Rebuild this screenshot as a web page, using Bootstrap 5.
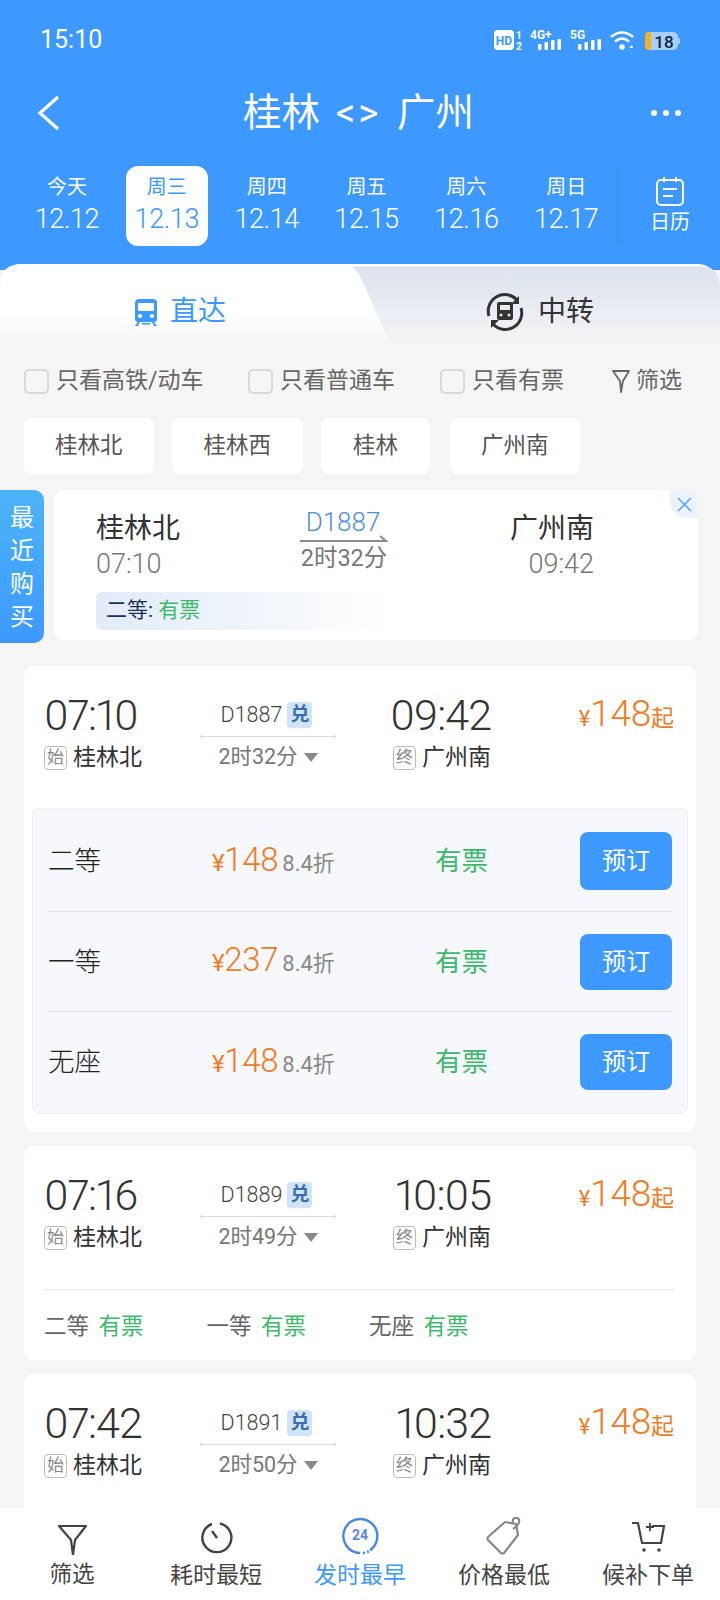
<!doctype html>
<html lang="zh-CN">
<head>
<meta charset="utf-8">
<title>桂林 广州</title>
<link href="https://cdn.jsdelivr.net/npm/bootstrap@5.3.0/dist/css/bootstrap.min.css" rel="stylesheet">
<style>
html,body{margin:0;background:#f5f5f5}
body{font-family:Roboto,"Noto Sans CJK SC",sans-serif;font-weight:400;color:#333}
.screen{width:720px;height:1600px;overflow:hidden}
.hdr{background:#3d98ff;height:270px;color:#fff;flex:none}
.stat{height:80px;padding:0 40px;font-size:25px;line-height:80px}
.titlebar{height:66px;padding:0 38px 0 37px;position:relative}
.titletext{font-size:38.500px;line-height:72px;flex:1;text-align:center;padding-left:6px;word-spacing:6px}
.titletext i{font-style:normal;letter-spacing:3px}
.daterow{margin-top:20px;padding-left:17px;height:80px}
.dayitem{width:100px;display:flex;flex-direction:column;align-items:center;position:relative}
.daypill{width:82px;height:80px;display:flex;flex-direction:column;align-items:center;border-radius:12px}
.daypill.cur{background:#fff;color:#3d98ff}
.wk{font-size:20px;line-height:24px;margin-top:9px}
.dt{font-size:27px;font-weight:300;line-height:36px;margin-top:2px;letter-spacing:-.4px}
.calbox{width:104px;padding-left:4px;display:flex;flex-direction:column;align-items:center;background:linear-gradient(90deg,#3b93f8 0,#3d98ff 12px)}
.callabel{font-size:20px;line-height:26px;margin-top:3px}
.tabs{position:relative;height:84px;margin-top:-6px;flex:none;background:linear-gradient(180deg,#fff 0,#fff 2px,#dde3ed 3px,#e7ebf2 40px,#f5f5f5 84px);border-radius:22px 22px 0 0}
.tabshape{position:absolute;left:0;top:0}
.tabrow{position:relative;height:84px}
.tab1{width:398px;font-size:28px;color:#3d98ff;padding-left:134px;gap:12px;padding-top:12px}
.tab2{padding-left:88px;font-size:28px;color:#333;gap:14px;padding-top:12px}
.filters{margin-top:20px;padding-left:24px;height:26px;font-size:23px;color:#666;flex:none}
.ft{display:flex;align-items:center;gap:7px;white-space:nowrap}
.form-check-input.box{width:25px;height:25px;margin:0;border:2px solid #d9d9d9;border-radius:5px;background-color:#f5f5f5;flex:none}
.w1{width:224px}.w2{width:192px}.w3{width:172px}
.chips{margin-top:24px;padding-left:24px;gap:18px;flex:none}
.chip{height:56px;line-height:54px;padding:0 31px;background:#fff;border-radius:8px;font-size:22.500px;color:#555}
.chip.mid{padding:0 32px}
.chip.last{margin-left:2px}
.recent{margin-top:16px;height:153px;flex:none}
.sidetab{width:44px;height:153px;background:linear-gradient(180deg,#4bb4f6 0,#3d98ff 100%);border-radius:0 10px 10px 0;color:#fff;font-size:24px;line-height:33px;text-align:center;padding-top:12px;flex:none}
.reccard{width:644px;height:150px;margin-left:10px;background:#fff;border-radius:10px;position:relative;padding:19px 42px 0;overflow:hidden}
.closec{position:absolute;right:0;top:0;width:28px;height:28px;background:#e9f2fd;border-radius:0 0 0 16px;display:flex;align-items:center;justify-content:center}
.recst{font-size:28px;line-height:40px;color:#333}
.rectime{font-size:27px;font-weight:300;line-height:36px;color:#777;margin-top:-3px}
.recno{font-size:26px;line-height:32px;color:#4a90e2;font-weight:300;text-align:center;margin-top:-3px;margin-left:-2px}
.recdur{font-size:23.500px;line-height:30px;color:#777;margin-top:0;text-align:center;white-space:nowrap}
.recmid{width:88px;margin-left:118px}
.recend{margin-left:118px;width:88px;text-align:right}
.recbadge{width:290px;height:38px;line-height:37px;margin-top:10px;border-radius:6px;background:linear-gradient(90deg,#e2ebf8 0,#f0f5fb 55%,#fff 100%);padding-left:10px;font-size:21px;color:#1d2f5f}
.grn{color:#3cb96b}
.trip{margin:0 24px;border:0;border-radius:10px;flex:none;background:#fff}
.first{margin-top:23px;padding-bottom:18px}
.next{margin-top:14px}
.lastc{padding-bottom:100px}
.trhead{padding-top:27px;height:102px}
.tdep{width:170px;padding-left:20px}
.tmid{width:148px;margin-top:-2px}
.tarr{width:149px;text-align:right}
.tpri{width:183px;padding-right:0;margin-top:-1px;justify-content:flex-end;display:flex;align-items:baseline;color:#f17a26;height:44px}
.clock{font-size:43px;line-height:44px;font-weight:300;color:#333;letter-spacing:-1px;font-variant-numeric:proportional-nums;font-feature-settings:"pnum" 1}
.stn{margin-top:9px;font-size:23px;line-height:24px;color:#333;gap:6px;height:24px}
.tarr .stn{justify-content:flex-end}
.mk{width:23px;height:24px;border:1px solid #bbb;border-radius:4px;font-size:17px;line-height:21px;color:#888;text-align:center;flex:none}
.noline{height:26px;margin-top:11px;gap:5px;font-size:21.500px;line-height:26px;color:#444;font-weight:300;padding-right:3px}
.dui{width:25px;height:26px;background:#cfe3fb;color:#3a6ea8;border-radius:4px;font-size:19px;line-height:25px;font-weight:700;text-align:center}
.rule{height:1px;background:#ddd;margin:8px 6px 0;position:relative}
.rule::before,.rule::after{content:"";position:absolute;top:-1px;width:3px;height:3px;border-radius:50%;background:#ddd}
.rule::before{left:0}.rule::after{right:0}
.durline{gap:6px;margin-top:8px;font-size:21.500px;line-height:24px;color:#777}
.tri{width:0;height:0;border-left:7px solid transparent;border-right:7px solid transparent;border-top:9px solid #888}
.yen{font-size:22px}
.num{font-size:37px;font-weight:300;letter-spacing:-.3px;line-height:44px}
.qi{font-size:23px}
.panel{margin:40px 8px 0;border:1px solid #eef0f4;border-radius:8px;background:#f6f8fb;padding:2px 15px 1px}
.prow{height:100px}
.prow.top{height:101px}
.prow.dv{border-bottom:1px solid #e4e6ea}
.pl{width:164px;font-size:26.500px;color:#222;font-weight:300}
.pp{width:223px;color:#f17a26;display:flex;align-items:baseline;gap:4px}
.pn{font-size:33px;font-weight:300;letter-spacing:-.3px;line-height:40px}
.pn small{font-size:24px;font-weight:400}
.pd{font-size:22px;color:#888}
.ps{flex:1;font-size:26.500px;color:#3cb96b}
.btn.bk{width:92px;height:56px;background:#3d98ff;border:0;border-radius:8px;color:#fff;font-size:24px;padding:0}
.top .btn.bk{height:58px}
.classes{margin:41px 22px 0 20px;border-top:1px solid #e6e6e6;height:71px;font-size:22.500px;color:#666;padding-top:4px}
.cl{width:162.500px}
.cl b{font-weight:400;color:#3cb96b;margin-left:4px}
.btm{height:92px;background:#fff;flex:none;position:relative}
.btmi{width:144px;display:flex;flex-direction:column;align-items:center;font-size:23px;color:#444}
.btmi svg{height:38px;margin-top:9px;width:40px}
.btmi span{line-height:30px;margin-top:6px}
.btmi.on{color:#3d98ff}
.flow{flex:1;min-height:0;overflow:hidden}
</style>
</head>
<body>
<div class="screen d-flex flex-column">
  <header class="hdr">
    <div class="stat d-flex justify-content-between">
      <span>15:10</span>
      <svg width="186" height="24" viewBox="0 0 186 24" style="margin-top:29px" fill="#fff" font-family="Roboto,sans-serif" font-weight="700">
        <rect x="0" y="1" width="20" height="20" rx="4"/>
        <text x="10" y="16" font-size="12" fill="#3d98ff" text-anchor="middle">HD</text>
        <text x="22" y="10" font-size="10">1</text><text x="22" y="21" font-size="10">2</text>
        <text x="36" y="10" font-size="12">4G+</text>
        <rect x="44" y="15" width="3.500" height="6" rx="1"/><rect x="50.500" y="13" width="3.500" height="8" rx="1"/><rect x="57" y="11" width="3.500" height="10" rx="1"/><rect x="63.500" y="10" width="3.500" height="11" rx="1"/>
        <text x="76" y="10" font-size="12">5G</text>
        <rect x="84" y="15" width="3.500" height="6" rx="1"/><rect x="90.500" y="13" width="3.500" height="8" rx="1"/><rect x="97" y="11" width="3.500" height="10" rx="1"/><rect x="103.500" y="10" width="3.500" height="11" rx="1"/>
        <g fill="none" stroke="#fff" stroke-width="2.600"><path d="M117 8q11-9 22 0"/><path d="M121 12.500q7-6 14 0"/></g><circle cx="128" cy="18" r="2.800"/><path d="M135 19l3-3 1 3z"/>
        <rect x="151" y="3" width="33" height="18" rx="5" fill="#a9cffb"/><rect x="184" y="9" width="2" height="6" rx="1" fill="#a9cffb"/>
        <path d="M157 3h-2a4 4 0 0 0-4 4v10a4 4 0 0 0 4 4h2z" fill="#f7b21b"/>
        <text x="170" y="18.500" font-size="17" font-weight="500" fill="#10233f" text-anchor="middle">18</text>
      </svg>
    </div>
    <div class="titlebar d-flex align-items-center">
      <svg width="24" height="36" viewBox="0 0 24 36" fill="none" stroke="#fff" stroke-width="3.200"><path d="M21 2 3 18l18 16"/></svg>
      <div class="titletext">桂林 <i>&lt;&gt;</i> 广州</div>
      <svg width="32" height="8" viewBox="0 0 32 8" fill="#fff"><circle cx="4" cy="4" r="3"/><circle cx="16" cy="4" r="3"/><circle cx="28" cy="4" r="3"/></svg>
    </div>
    <div class="daterow d-flex">
      <div class="dayitem"><div class="daypill"><div class="wk">今天</div><div class="dt">12.12</div></div></div>
      <div class="dayitem"><div class="daypill cur"><div class="wk">周三</div><div class="dt">12.13</div></div></div>
      <div class="dayitem"><div class="daypill"><div class="wk">周四</div><div class="dt">12.14</div></div></div>
      <div class="dayitem"><div class="daypill"><div class="wk">周五</div><div class="dt">12.15</div></div></div>
      <div class="dayitem"><div class="daypill"><div class="wk">周六</div><div class="dt">12.16</div></div></div>
      <div class="dayitem"><div class="daypill"><div class="wk">周日</div><div class="dt">12.17</div></div></div>
      <div class="calbox">
        <svg width="30" height="30" viewBox="0 0 30 30" fill="none" stroke="#fff" stroke-width="2" style="margin-top:10px"><rect x="2" y="4" width="26" height="25" rx="4"/><path d="M9 1v5M21 1v5M8 13h14M8 20h10"/></svg>
        <div class="callabel">日历</div>
      </div>
    </div>
  </header>

  <div class="tabs">
    <svg class="tabshape" width="400" height="84" viewBox="0 0 400 84"><defs><linearGradient id="tg" x1="0" y1="0" x2="0" y2="1"><stop offset="0" stop-color="#fff"/><stop offset=".6" stop-color="#fff"/><stop offset="1" stop-color="#f5f5f5"/></linearGradient></defs><path d="M0 84V22Q0 0 22 0H340Q354 0 360 12L392 84Z" fill="url(#tg)"/></svg>
    <div class="tabrow d-flex">
      <div class="tab1 d-flex align-items-center">
        <svg width="24" height="27" viewBox="0 0 24 27" fill="#3d98ff"><path d="M5 0h14a4 4 0 0 1 4 4v16a3 3 0 0 1-3 3H4a3 3 0 0 1-3-3V4a4 4 0 0 1 4-4z"/><rect x="4" y="4" width="16" height="8" rx="1" fill="#fff"/><circle cx="6" cy="17" r="2" fill="#fff"/><circle cx="18" cy="17" r="2" fill="#fff"/><path d="M4 23 1 27h3l2-4zM20 23l3 4h-3l-2-4zM8 24h8v1.500H8z"/></svg>
        <span>直达</span>
      </div>
      <div class="tab2 d-flex align-items-center">
        <svg width="38" height="38" viewBox="0 0 38 38"><g fill="none" stroke="#333" stroke-width="3"><path d="M3 23A16.500 16.500 0 0 1 31 7"/><path d="M35 15A16.500 16.500 0 0 1 7 31"/></g><path d="M33 3v8h-8zM5 35v-8h8z" fill="#333"/><path d="M13 9h12a2 2 0 0 1 2 2v14a2 2 0 0 1-2 2H13a2 2 0 0 1-2-2V11a2 2 0 0 1 2-2z" fill="#333"/><rect x="14" y="12" width="10" height="5" fill="#e7ebf2"/><circle cx="15" cy="22" r="1.500" fill="#e7ebf2"/><circle cx="23" cy="22" r="1.500" fill="#e7ebf2"/></svg>
        <span>中转</span>
      </div>
    </div>
  </div>

  <div class="filters d-flex">
    <label class="ft w1"><input class="form-check-input box" type="checkbox">只看高铁/动车</label>
    <label class="ft w2"><input class="form-check-input box" type="checkbox">只看普通车</label>
    <label class="ft w3"><input class="form-check-input box" type="checkbox">只看有票</label>
    <div class="ft" style="gap:6px"><svg width="18" height="24" viewBox="0 0 18 24" fill="none" stroke="#666" stroke-width="1.800"><path d="M1 2h16L11 12 9 23 8 12z" stroke-linejoin="round"/></svg>筛选</div>
  </div>

  <div class="chips d-flex">
    <div class="chip">桂林北</div><div class="chip mid">桂林西</div><div class="chip mid">桂林</div><div class="chip last">广州南</div>
  </div>

  <div class="recent d-flex">
    <div class="sidetab">最<br>近<br>购<br>买</div>
    <div class="reccard">
      <div class="closec"><svg width="15" height="15" viewBox="0 0 15 15" fill="none" stroke="#5ea6f5" stroke-width="1.600"><path d="M1 1l13 13M14 1 1 14"/></svg></div>
      <div class="d-flex">
        <div style="width:86px"><div class="recst">桂林北</div><div class="rectime">07:10</div></div>
        <div class="recmid">
          <div class="recno">D1887<svg width="88" height="8" viewBox="0 0 88 8" class="d-block" style="margin-top:-3px;margin-left:2px"><path d="M0 6h86l-6-5" fill="none" stroke="#8c8c8c" stroke-width="2"/></svg></div>
          <div class="recdur">2时32分</div>
        </div>
        <div class="recend"><div class="recst">广州南</div><div class="rectime">09:42</div></div>
      </div>
      <div class="recbadge">二等: <span class="grn">有票</span></div>
    </div>
  </div>

  <div class="flow">
    <div class="card trip first">
      <div class="trhead d-flex">
        <div class="tdep"><div class="clock">07:10</div><div class="stn d-flex"><span class="mk">始</span>桂林北</div></div>
        <div class="tmid">
          <div class="noline d-flex justify-content-center"><span>D1887</span><span class="dui">兑</span></div>
          <div class="rule"></div>
          <div class="durline d-flex justify-content-center align-items-center">2时32分<span class="tri"></span></div>
        </div>
        <div class="tarr"><div class="clock">09:42</div><div class="stn d-flex"><span class="mk">终</span>广州南</div></div>
        <div class="tpri"><span class="yen">¥</span><span class="num">148</span><span class="qi">起</span></div>
      </div>
      <div class="panel">
        <div class="prow top dv d-flex align-items-center"><div class="pl">二等</div><div class="pp"><span class="pn"><small>¥</small>148</span><span class="pd">8.4折</span></div><div class="ps">有票</div><button class="btn bk" type="button">预订</button></div>
        <div class="prow dv d-flex align-items-center"><div class="pl">一等</div><div class="pp"><span class="pn"><small>¥</small>237</span><span class="pd">8.4折</span></div><div class="ps">有票</div><button class="btn bk" type="button">预订</button></div>
        <div class="prow d-flex align-items-center"><div class="pl">无座</div><div class="pp"><span class="pn"><small>¥</small>148</span><span class="pd">8.4折</span></div><div class="ps">有票</div><button class="btn bk" type="button">预订</button></div>
      </div>
    </div>

    <div class="card trip next">
      <div class="trhead d-flex">
        <div class="tdep"><div class="clock">07:16</div><div class="stn d-flex"><span class="mk">始</span>桂林北</div></div>
        <div class="tmid">
          <div class="noline d-flex justify-content-center"><span>D1889</span><span class="dui">兑</span></div>
          <div class="rule"></div>
          <div class="durline d-flex justify-content-center align-items-center">2时49分<span class="tri"></span></div>
        </div>
        <div class="tarr"><div class="clock">10:05</div><div class="stn d-flex"><span class="mk">终</span>广州南</div></div>
        <div class="tpri"><span class="yen">¥</span><span class="num">148</span><span class="qi">起</span></div>
      </div>
      <div class="classes d-flex align-items-center">
        <div class="cl">二等 <b>有票</b></div><div class="cl">一等 <b>有票</b></div><div class="cl">无座 <b>有票</b></div>
      </div>
    </div>

    <div class="card trip next lastc">
      <div class="trhead d-flex">
        <div class="tdep"><div class="clock">07:42</div><div class="stn d-flex"><span class="mk">始</span>桂林北</div></div>
        <div class="tmid">
          <div class="noline d-flex justify-content-center"><span>D1891</span><span class="dui">兑</span></div>
          <div class="rule"></div>
          <div class="durline d-flex justify-content-center align-items-center">2时50分<span class="tri"></span></div>
        </div>
        <div class="tarr"><div class="clock">10:32</div><div class="stn d-flex"><span class="mk">终</span>广州南</div></div>
        <div class="tpri"><span class="yen">¥</span><span class="num">148</span><span class="qi">起</span></div>
      </div>
    </div>
  </div>

  <nav class="btm d-flex">
    <div class="btmi"><svg viewBox="0 0 40 38" fill="none" stroke="#444" stroke-width="2.200"><path d="M7 9h27L23 23l-2 15-2-15z" stroke-linejoin="round"/></svg><span style="margin-top:4px;font-size:22.500px">筛选</span></div>
    <div class="btmi"><svg viewBox="0 0 40 38" fill="none" stroke="#444" stroke-width="2.400"><path d="M16 7a14.500 14.500 0 1 0 8-.500"/><path d="M16 14l5 7"/></svg><span>耗时最短</span></div>
    <div class="btmi on"><svg viewBox="0 0 40 38" fill="none" stroke="#4a86e8" stroke-width="2.400"><path d="M30 33A17 17 0 1 0 20 36" /><path d="M23 36q7-1 10-5" stroke-dasharray="2 2"/><text x="20" y="23" font-size="14" font-weight="700" text-anchor="middle" fill="#5c8de0" stroke="none" font-family="Roboto,sans-serif">24</text></svg><span>发时最早</span></div>
    <div class="btmi"><svg viewBox="0 0 40 38" fill="none" stroke="#888" stroke-width="2.200"><path d="M4 20 21 5l11 2 2 11-14 18q-2 1-3 0L4 23q-1-2 0-3z" stroke-linejoin="round"/><path d="M29 12q5-3 6-7t-3-4-3 5"/></svg><span>价格最低</span></div>
    <div class="btmi"><svg viewBox="0 0 40 38" fill="none" stroke="#444" stroke-width="2.200"><path d="M4 6h6l4 20h19l3-17H24"/><path d="M18 10h8M22 6v8" stroke-width="1.800"/><circle cx="16" cy="33" r="1.800" fill="#444" stroke="none"/><circle cx="31" cy="33" r="1.800" fill="#444" stroke="none"/></svg><span>候补下单</span></div>
  </nav>
</div>
<script src="https://cdn.jsdelivr.net/npm/bootstrap@5.3.0/dist/js/bootstrap.bundle.min.js"></script>
</body>
</html>
